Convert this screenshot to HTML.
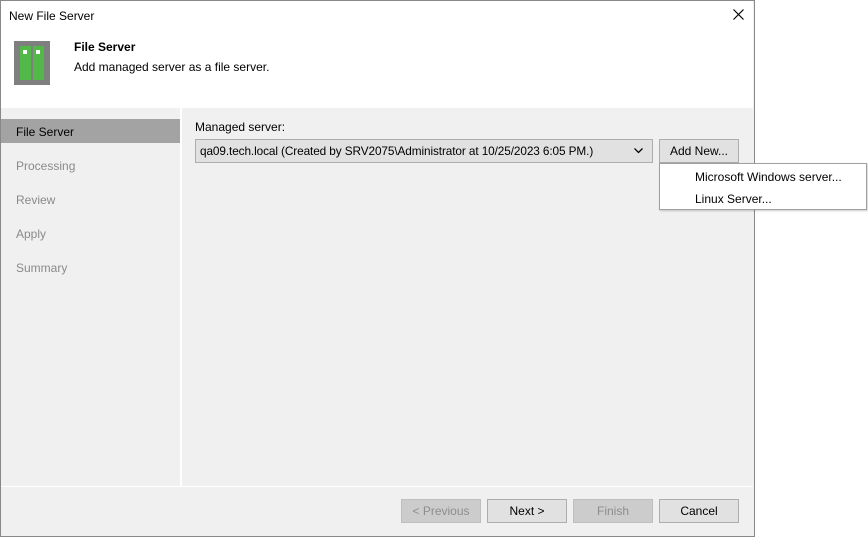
<!DOCTYPE html><html><head><style>
body{margin:0;width:868px;height:537px;background:#fff;position:relative;overflow:hidden;font-family:"Liberation Sans",sans-serif;font-size:12px;color:#000}
.a{position:absolute}
.btn{position:absolute;top:499px;border:1px solid #adadad;background:#e1e1e1;text-align:center;line-height:22px;box-sizing:border-box;height:24px}
</style></head><body>
<div class="a" style="left:0;top:0;width:753px;height:535px;border:1px solid #888;background:#f0f0f0"></div>
<div class="a" style="left:1px;top:1px;width:752px;height:107px;background:#fff"></div>
<div class="a" style="left:9px;top:9px">New File Server</div>
<svg class="a" style="left:733px;top:9px" width="11" height="11"><path d="M0.5 0.5L10.5 10.5M10.5 0.5L0.5 10.5" stroke="#000" stroke-width="1.2"/></svg>
<div class="a" style="left:14px;top:41px;width:36px;height:44px;background:#7f7f7f"></div>
<div class="a" style="left:20px;top:46px;width:11px;height:34px;background:#52b848"></div>
<div class="a" style="left:33px;top:46px;width:11px;height:34px;background:#52b848"></div>
<div class="a" style="left:23px;top:50px;width:4px;height:4px;background:#fff"></div>
<div class="a" style="left:36px;top:50px;width:4px;height:4px;background:#fff"></div>
<div class="a" style="left:74px;top:40px;font-weight:bold">File Server</div>
<div class="a" style="left:74px;top:60px">Add managed server as a file server.</div>
<div class="a" style="left:180px;top:108px;width:2px;height:378px;background:#fff"></div>
<div class="a" style="left:1px;top:119px;width:179px;height:24px;background:#a3a3a3"></div>
<div class="a" style="left:16px;top:125px">File Server</div>
<div class="a" style="left:16px;top:159px;color:#8a8a8a">Processing</div>
<div class="a" style="left:16px;top:193px;color:#8a8a8a">Review</div>
<div class="a" style="left:16px;top:227px;color:#8a8a8a">Apply</div>
<div class="a" style="left:16px;top:261px;color:#8a8a8a">Summary</div>
<div class="a" style="left:195px;top:120px">Managed server:</div>
<div class="a" style="left:195px;top:139px;width:458px;height:24px;box-sizing:border-box;border:1px solid #adadad;background:#e1e1e1"></div>
<div class="a" style="left:200px;top:144px;font-size:11.8px;letter-spacing:-0.1px">qa09.tech.local (Created by SRV2075\Administrator at 10/25/2023 6:05 PM.)</div>
<svg class="a" style="left:634px;top:148px" width="9" height="6"><path d="M0.5 0.5L4.5 4.5L8.5 0.5" stroke="#000" stroke-width="1.3" fill="none"/></svg>
<div class="btn" style="left:659px;top:139px;width:80px">Add New...</div>
<div class="a" style="left:659px;top:163px;width:208px;height:47px;box-sizing:border-box;border:1px solid #a0a0a0;background:#fff;box-shadow:1px 1px 2px rgba(0,0,0,.2)"></div>
<div class="a" style="left:695px;top:170px">Microsoft Windows server...</div>
<div class="a" style="left:695px;top:192px">Linux Server...</div>
<div class="a" style="left:1px;top:486px;width:752px;height:1px;background:#fff"></div>
<div class="btn" style="left:401px;width:80px;color:#8d8d8d;background:#cccccc;border-color:#bfbfbf">&lt; Previous</div>
<div class="btn" style="left:487px;width:80px">Next &gt;</div>
<div class="btn" style="left:573px;width:80px;color:#8d8d8d;background:#cccccc;border-color:#bfbfbf">Finish</div>
<div class="btn" style="left:659px;width:80px">Cancel</div>
</body></html>
